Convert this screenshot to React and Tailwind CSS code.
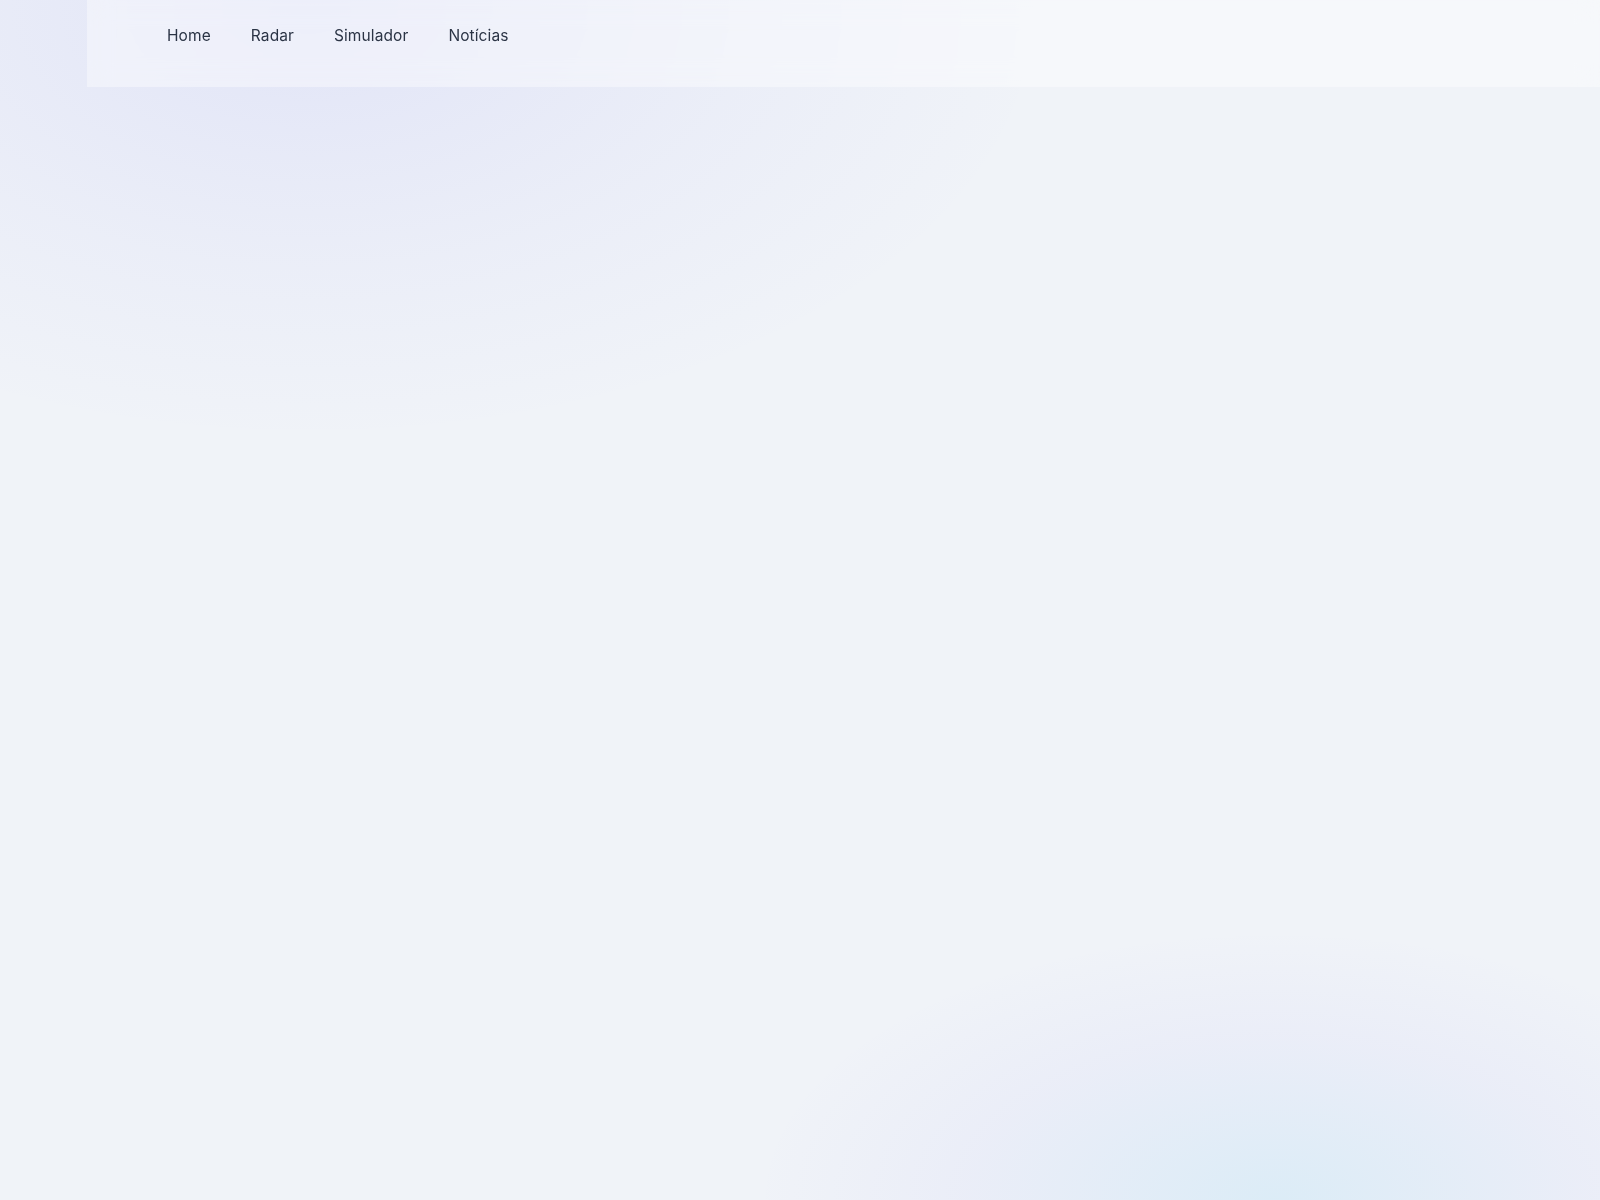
// ============================================
// RADAR LANDING SHELL
// ============================================

import React from 'react';

const navItems = ['Home', 'Radar', 'Simulador', 'Notícias'];

// ============================================
// HEADER
// ============================================
const Header = () => (
  <header className="ml-[87px] h-[87px] bg-white/40 backdrop-blur-md">
    <nav className="flex items-center gap-10 pl-[80px] pt-[26px]">
      {navItems.map((item) => (
        <a
          key={item}
          href="#"
          className="text-[15.5px] leading-5 tracking-[0.1px] text-[#2b3445] hover:text-slate-900"
        >
          {item}
        </a>
      ))}
    </nav>
  </header>
);

// ============================================
// APP
// ============================================
export default function App() {
  return (
    <div
      className="min-h-screen w-full bg-[#f0f3f8] bg-[radial-gradient(ellipse_740px_430px_at_310px_10px,rgba(99,102,241,0.1),rgba(99,102,241,0.035)_60%,transparent),radial-gradient(ellipse_520px_270px_at_1275px_1200px,rgba(14,165,233,0.09),rgba(99,102,241,0.04)_60%,transparent)]"
      style={{ fontFamily: 'Inter, "Noto Sans", sans-serif' }}
    >
      <Header />
    </div>
  );
}
